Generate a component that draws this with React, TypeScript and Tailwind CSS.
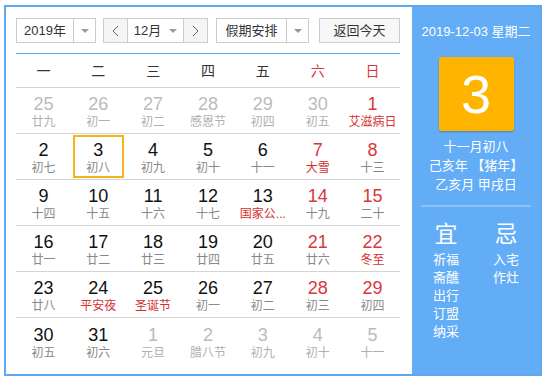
type Day = { n: number; l: string; faded?: boolean; redN?: boolean; redL?: boolean; sel?: boolean };

const rows: Day[][] = [
  [
    { n: 25, l: "廿九", faded: true },
    { n: 26, l: "初一", faded: true },
    { n: 27, l: "初二", faded: true },
    { n: 28, l: "感恩节", faded: true },
    { n: 29, l: "初四", faded: true },
    { n: 30, l: "初五", faded: true },
    { n: 1, l: "艾滋病日", redN: true, redL: true },
  ],
  [
    { n: 2, l: "初七" },
    { n: 3, l: "初八", sel: true },
    { n: 4, l: "初九" },
    { n: 5, l: "初十" },
    { n: 6, l: "十一" },
    { n: 7, l: "大雪", redN: true, redL: true },
    { n: 8, l: "十三", redN: true },
  ],
  [
    { n: 9, l: "十四" },
    { n: 10, l: "十五" },
    { n: 11, l: "十六" },
    { n: 12, l: "十七" },
    { n: 13, l: "国家公...", redL: true },
    { n: 14, l: "十九", redN: true },
    { n: 15, l: "二十", redN: true },
  ],
  [
    { n: 16, l: "廿一" },
    { n: 17, l: "廿二" },
    { n: 18, l: "廿三" },
    { n: 19, l: "廿四" },
    { n: 20, l: "廿五" },
    { n: 21, l: "廿六", redN: true },
    { n: 22, l: "冬至", redN: true, redL: true },
  ],
  [
    { n: 23, l: "廿八" },
    { n: 24, l: "平安夜", redL: true },
    { n: 25, l: "圣诞节", redL: true },
    { n: 26, l: "初一" },
    { n: 27, l: "初二" },
    { n: 28, l: "初三", redN: true },
    { n: 29, l: "初四", redN: true },
  ],
  [
    { n: 30, l: "初五" },
    { n: 31, l: "初六" },
    { n: 1, l: "元旦", faded: true },
    { n: 2, l: "腊八节", faded: true },
    { n: 3, l: "初九", faded: true },
    { n: 4, l: "初十", faded: true },
    { n: 5, l: "十一", faded: true },
  ],
];

const weekdays = ["一", "二", "三", "四", "五", "六", "日"];

function Caret() {
  return <span className="block w-0 h-0 border-x-[4px] border-x-transparent border-t-[4px] border-t-[#999]" />;
}

function Chevron({ dir }: { dir: "l" | "r" }) {
  return (
    <svg width="7" height="12" viewBox="0 0 7 12" fill="none" stroke="#666" strokeWidth="1">
      {dir === "l" ? <path d="M6 1 L1 6 L6 11" /> : <path d="M1 1 L6 6 L1 11" />}
    </svg>
  );
}

export default function App() {
  return (
    <div
      className="w-[547px] h-[381px] bg-white pt-[5px] pl-[4px]"
      style={{ fontFamily: '"Liberation Sans", "Noto Sans CJK SC", sans-serif' }}
    >
      <div className="w-[538px] h-[371px] border-2 border-[#5ea8f2] flex">
        {/* left: calendar */}
        <div className="w-[406px] pl-[10px] pt-[11px]">
          <div className="flex h-[25px] text-[13px] text-[#333]">
            <div className="w-[80px] border border-[#ccc] flex">
              <div className="w-[56px] flex items-center justify-center">2019年</div>
              <div className="flex-1 border-l border-[#ccc] flex items-center justify-center">
                <Caret />
              </div>
            </div>
            <div className="ml-[7px] w-[105px] border border-[#ccc] flex">
              <div className="w-[23px] bg-[#f5f5f5] flex items-center justify-center">
                <Chevron dir="l" />
              </div>
              <div className="flex-1 border-x border-[#ccc] flex items-center justify-center gap-[8px]">
                <span>12月</span>
                <Caret />
              </div>
              <div className="w-[23px] bg-[#f5f5f5] flex items-center justify-center">
                <Chevron dir="r" />
              </div>
            </div>
            <div className="ml-[8px] w-[93px] border border-[#ccc] flex">
              <div className="w-[69px] flex items-center justify-center">假期安排</div>
              <div className="flex-1 border-l border-[#ccc] flex items-center justify-center">
                <Caret />
              </div>
            </div>
            <div className="ml-[10px] w-[81px] border border-[#ccc] bg-[#f7f7f7] flex items-center justify-center">
              返回今天
            </div>
          </div>
          <div className="mt-[10px] w-[384px] h-px bg-[#5ea8f2]" />
          <div className="w-[384px]">
            <div className="grid grid-cols-7 h-[34px] items-center border-b border-[#d4d4d4] text-[14px] pt-[2px]">
              {weekdays.map((w, i) => (
                <div key={w} className={`text-center ${i >= 5 ? "text-[#d9363e]" : "text-[#333]"}`}>
                  {w}
                </div>
              ))}
            </div>
            {rows.map((r, ri) => (
              <div
                key={ri}
                className={`grid grid-cols-7 h-[46px] ${ri < rows.length - 1 ? "border-b border-[#d4d4d4]" : ""}`}
              >
                {r.map((d, ci) => (
                  <div key={ci} className="flex items-center justify-center">
                    <div
                      className={`w-[51px] h-[43px] flex flex-col items-center pt-[3px] ${
                        d.sel ? "border-2 border-[#f4b617]" : "border-2 border-transparent"
                      }`}
                    >
                      <span
                        className={`text-[18px] leading-[20px] ${
                          d.faded ? "text-[#bbb]" : d.redN ? "text-[#d9363e]" : "text-[#111]"
                        }`}
                      >
                        {d.n}
                      </span>
                      <span
                        className={`text-[12px] leading-[16px] whitespace-nowrap ${
                          d.redL ? "text-[#d43030]" : d.faded ? "text-[#b0b0b0]" : "text-[#888]"
                        }`}
                      >
                        {d.l}
                      </span>
                    </div>
                  </div>
                ))}
              </div>
            ))}
          </div>
        </div>
        {/* right: detail panel */}
        <div className="flex-1 bg-[#63adf7] text-white flex flex-col items-center pt-[16px]">
          <div className="text-[13px] leading-[18px]">2019-12-03 星期二</div>
          <div className="mt-[16px] w-[75px] h-[74px] bg-[#ffb400] rounded-[2px] shadow-[0_1px_2px_rgba(0,0,0,0.25)] flex items-center justify-center text-[54px] leading-none">
            3
          </div>
          <div className="mt-[6px] text-[13px] leading-[19px] text-center">
            <div>十一月初八</div>
            <div>己亥年 【猪年】</div>
            <div>乙亥月 甲戌日</div>
          </div>
          <div className="mt-[11px] w-[110px] h-[2px] bg-[#8cc4fa]" />
          <div className="mt-[14px] flex gap-[34px]">
            <div className="flex flex-col items-center">
              <div className="text-[23px] leading-[26px]">宜</div>
              <div className="mt-[4px] text-[13px] leading-[18px] flex flex-col items-center">
                <span>祈福</span>
                <span>斋醮</span>
                <span>出行</span>
                <span>订盟</span>
                <span>纳采</span>
              </div>
            </div>
            <div className="flex flex-col items-center">
              <div className="text-[23px] leading-[26px]">忌</div>
              <div className="mt-[4px] text-[13px] leading-[18px] flex flex-col items-center">
                <span>入宅</span>
                <span>作灶</span>
              </div>
            </div>
          </div>
        </div>
      </div>
    </div>
  );
}
